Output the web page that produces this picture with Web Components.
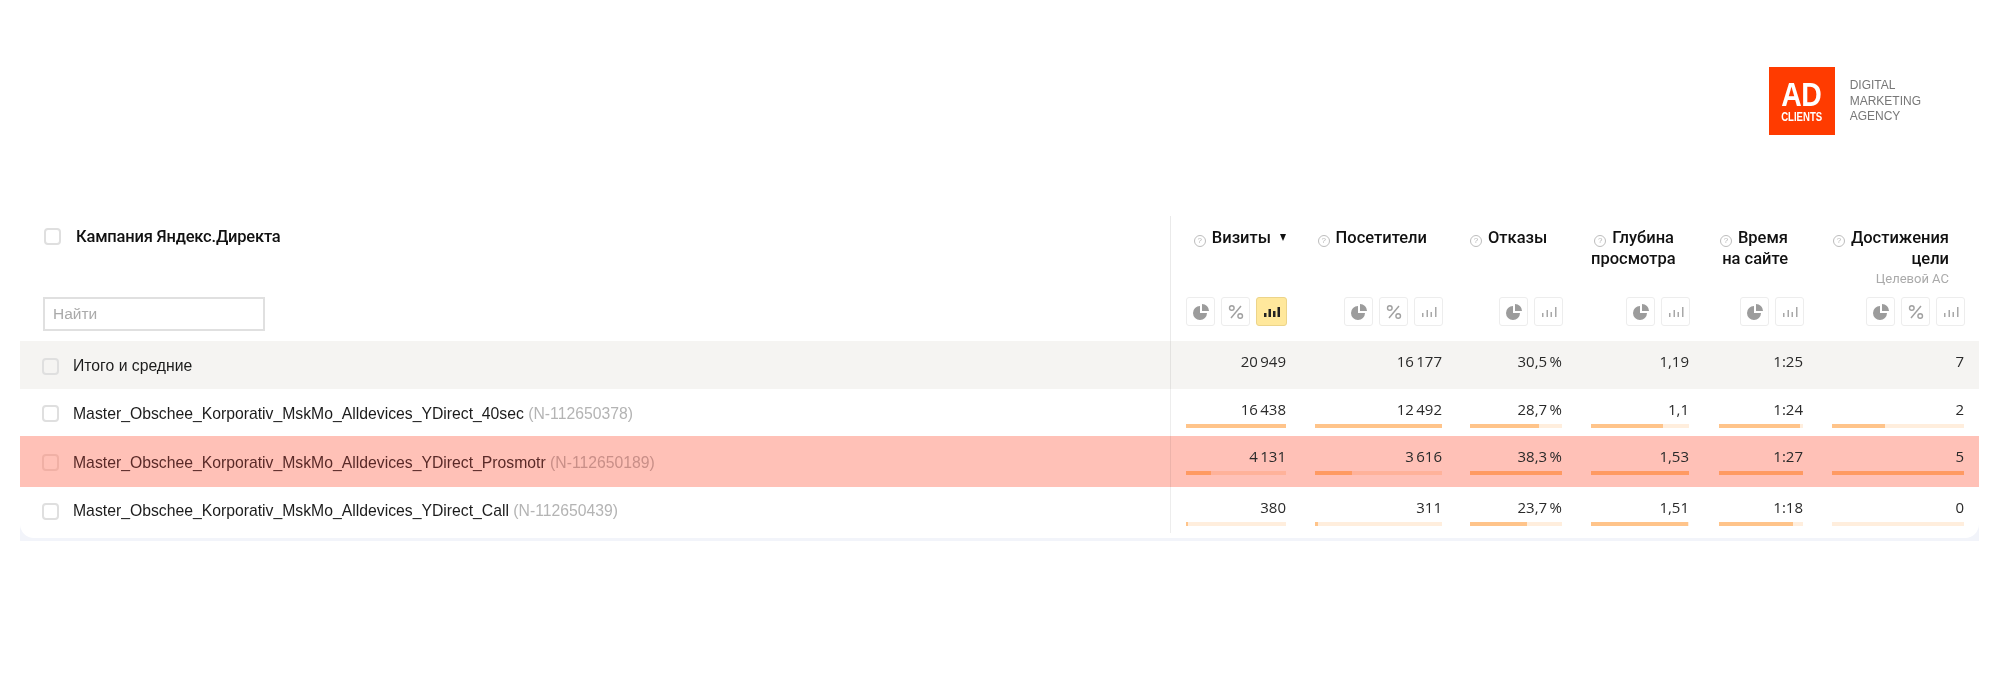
<!DOCTYPE html>
<html lang="ru">
<head>
<meta charset="utf-8">
<title>Отчёт</title>
<style>
  html, body { margin: 0; background: #fff; }
  body {
    font-family: "Liberation Sans", Arial, sans-serif;
    color: #222;
    --cols: 1150px 116px 156px 120px 127px 114px 161px;
  }
</style>
</head>
<body>

<ad-page>
  <ad-logo slot="logo"></ad-logo>
  <report-table slot="table">
    <report-head>
      <name-head></name-head>
      <metric-head help sorted views="pie,percent,bars-on" pad="15">Визиты</metric-head>
      <metric-head help views="pie,percent,bars" pad="29">Посетители</metric-head>
      <metric-head help views="pie,bars" pad="28">Отказы</metric-head>
      <metric-head help views="pie,bars" pad="29">Глубина<br>просмотра</metric-head>
      <metric-head help views="pie,bars" pad="30">Время<br>на&nbsp;сайте</metric-head>
      <metric-head help views="pie,percent,bars" pad="29" sub="Целевой АС">Достижения<br>цели</metric-head>
    </report-head>

    <report-row kind="total" height="48">
      <row-name>Итого и средние</row-name>
      <metric-cell pad="15" first>20&#8201;949</metric-cell>
      <metric-cell pad="29">16&#8201;177</metric-cell>
      <metric-cell pad="28">30,5&#8201;%</metric-cell>
      <metric-cell pad="29">1,19</metric-cell>
      <metric-cell pad="30">1:25</metric-cell>
      <metric-cell pad="29">7</metric-cell>
    </report-row>

    <report-row height="47">
      <row-name code="(N-112650378)">Master_Obschee_Korporativ_MskMo_Alldevices_YDirect_40sec</row-name>
      <metric-cell pad="15" first bar="100">16&#8201;438</metric-cell>
      <metric-cell pad="29" bar="100">12&#8201;492</metric-cell>
      <metric-cell pad="28" bar="75">28,7&#8201;%</metric-cell>
      <metric-cell pad="29" bar="73">1,1</metric-cell>
      <metric-cell pad="30" bar="96">1:24</metric-cell>
      <metric-cell pad="29" bar="40">2</metric-cell>
    </report-row>

    <report-row kind="marked" height="51">
      <row-name code="(N-112650189)">Master_Obschee_Korporativ_MskMo_Alldevices_YDirect_Prosmotr</row-name>
      <metric-cell pad="15" first bar="25">4&#8201;131</metric-cell>
      <metric-cell pad="29" bar="29">3&#8201;616</metric-cell>
      <metric-cell pad="28" bar="100">38,3&#8201;%</metric-cell>
      <metric-cell pad="29" bar="100">1,53</metric-cell>
      <metric-cell pad="30" bar="100">1:27</metric-cell>
      <metric-cell pad="29" bar="100">5</metric-cell>
    </report-row>

    <report-row height="46">
      <row-name code="(N-112650439)">Master_Obschee_Korporativ_MskMo_Alldevices_YDirect_Call</row-name>
      <metric-cell pad="15" first bar="2">380</metric-cell>
      <metric-cell pad="29" bar="2">311</metric-cell>
      <metric-cell pad="28" bar="62">23,7&#8201;%</metric-cell>
      <metric-cell pad="29" bar="99">1,51</metric-cell>
      <metric-cell pad="30" bar="88">1:18</metric-cell>
      <metric-cell pad="29" bar="0">0</metric-cell>
    </report-row>
  </report-table>
</ad-page>

<script>
function define(name, css, html) {
  customElements.define(name, class extends HTMLElement {
    constructor() {
      super();
      this.attachShadow({mode: 'open'});
      this.shadowRoot.innerHTML = `<style>${css}</style>${html}`;
    }
  });
}

define('ad-page', `
  :host { display: block; filter: blur(.3px); }
  .top { display: flex; justify-content: flex-end; padding: 67px 78px 81px 0; }
  .table { display: block; padding-left: 20px; padding-right: 20px; }
`, `
  <div class="top"><slot name="logo"></slot></div>
  <div class="table"><slot name="table"></slot></div>
`);

define('ad-logo', `
  :host { display: flex; align-items: center; gap: 15px; height: 68px; }
  .square {
    width: 66px; height: 68px; background: #ff3b00; color: #fff;
    display: flex; flex-direction: column; align-items: center; font-weight: 700;
  }
  .ad { font-size: 33px; line-height: 24px; margin-top: 16px; transform: scaleX(.86); letter-spacing: -.5px; }
  .clients { font-size: 12px; line-height: 9px; margin-top: 6px; transform: scaleX(.8); }
  .text { font-size: 12px; line-height: 15.5px; color: #777; padding-top: 1px; }
`, `
  <div class="square"><span class="ad">AD</span><span class="clients">CLIENTS</span></div>
  <div class="text">DIGITAL<br>MARKETING<br>AGENCY</div>
`);

define('report-table', `
  :host { display: block; height: 325px; background: linear-gradient(transparent 300px, #f2f4fa 300px); }
  .card { background: #fff; border-radius: 0 0 14px 14px; height: 322px; }
`, `<div class="card"><slot></slot></div>`);

define('report-head', `
  :host { display: grid; grid-template-columns: var(--cols); height: 125px; }
`, `<slot></slot>`);

define('check-box', `
  :host {
    display: block; box-sizing: border-box; width: 17px; height: 17px;
    border: 2px solid #dfdfdf; border-radius: 4px; background: #fff;
  }
`, ``);

define('name-head', `
  :host { display: flex; flex-direction: column; padding: 12px 0 0 24px; }
  .title { display: flex; align-items: center; gap: 15px; font: 500 16.5px/18px Roboto, sans-serif; color: #111; letter-spacing: -.2px; }
  .title check-box { margin-top: -2px; }
  .find {
    box-sizing: border-box; width: 222px; height: 34px; margin-top: 51px; margin-left: -1px;
    border: 2px solid #e0e0e0; padding-left: 8px;
    font: 15.5px/30px "Liberation Sans", sans-serif; color: #aaa;
  }
`, `
  <div class="title"><check-box></check-box><span>Кампания Яндекс.Директа</span></div>
  <div class="find">Найти</div>
`);

define('help-icon', `
  :host {
    display: inline-block; box-sizing: border-box; width: 12px; height: 12px; margin-right: 6px;
    border: 1px solid #bdbdbd; border-radius: 50%; color: #b5b5b5; vertical-align: 0;
    font: 400 8px/10px "Liberation Sans", sans-serif; text-align: center;
  }
`, `?`);

// the little chart-type buttons under each column title
const VIEW_ICONS = {
  pie: `<svg width="18" height="18" viewBox="0 0 18 18"><path fill="#9c9c9c" d="M8 3a7 7 0 1 0 7 7H8zM10 1v7h7a7 7 0 0 0-7-7z"/></svg>`,
  percent: `<svg width="18" height="18" viewBox="0 0 18 18" fill="none" stroke="#a0a0a0" stroke-width="1.4"><path d="M14 3 4 15"/><circle cx="4.8" cy="5" r="2.3"/><circle cx="13.2" cy="13" r="2.3"/></svg>`,
  bars: `<svg width="18" height="18" viewBox="0 0 18 18" fill="#a8a8a8"><rect x="2" y="10" width="1.5" height="4"/><rect x="6.5" y="7" width="1.5" height="7"/><rect x="10.5" y="9" width="1.5" height="5"/><rect x="15" y="4" width="1.5" height="10"/></svg>`,
  'bars-on': `<svg width="18" height="18" viewBox="0 0 18 18" fill="#222"><rect x="1" y="10" width="2.5" height="4"/><rect x="5.5" y="6" width="2.5" height="8"/><rect x="10" y="8" width="2.5" height="6"/><rect x="14.5" y="4" width="2.5" height="10"/></svg>`
};

class ViewButton extends HTMLElement {
  constructor() {
    super();
    this.attachShadow({mode: 'open'});
  }
  connectedCallback() {
    const type = this.getAttribute('type');
    this.shadowRoot.innerHTML = `
      <style>
        :host {
          display: flex; align-items: center; justify-content: center; box-sizing: border-box;
          width: 29px; height: 29px; border: 1px solid #ededed; border-radius: 3px; background: #fff;
        }
        :host([type=bars-on]) { width: 31px; background: #ffe89c; border-color: #ecd48a; }
      </style>
      ${VIEW_ICONS[type]}`;
  }
}
customElements.define('view-button', ViewButton);

class MetricHead extends HTMLElement {
  constructor() {
    super();
    this.attachShadow({mode: 'open'});
  }
  connectedCallback() {
    const views = this.getAttribute('views').split(',');
    const sub = this.getAttribute('sub');
    const sorted = this.hasAttribute('sorted');
    this.shadowRoot.innerHTML = `
      <style>
        :host {
          display: flex; flex-direction: column; justify-content: space-between; box-sizing: border-box;
          padding: 11px 0 15px ${this.getAttribute('pad')}px;
        }
        :host([sorted]) { border-left: 1px solid #eaeaea; }
        .label {
          position: relative; padding-right: 15px; text-align: right; white-space: nowrap;
          font: 500 16.5px/21px Roboto, sans-serif; color: #111;
        }
        .sort { position: absolute; right: 0; top: 7px; width: 0; height: 0; border: 3.5px solid transparent; border-top: 7px solid #111; border-bottom: 0; }
        .sub { display: block; font: 400 13px/20px Roboto, sans-serif; color: #aaa; }
        .views { display: flex; justify-content: flex-end; gap: 6px; margin-right: -1px; }
      </style>
      <div class="label"><help-icon></help-icon><slot></slot>${sorted ? '<span class="sort"></span>' : ''}${sub ? `<span class="sub">${sub}</span>` : ''}</div>
      <div class="views">${views.map(v => `<view-button type="${v}"></view-button>`).join('')}</div>`;
  }
}
customElements.define('metric-head', MetricHead);

class ReportRow extends HTMLElement {
  constructor() {
    super();
    this.attachShadow({mode: 'open'});
    this.shadowRoot.innerHTML = `
      <style>
        :host { display: grid; grid-template-columns: var(--cols); padding-right: 15px; }
        :host([kind=total]) { background: #f5f4f2; }
        :host([kind=marked]) { background: #ffc1b7; --track: #ffb29a; --fill: #ff9a62; --code: #c98f88; --box: #f0b0a5; --name: #5a2a28; }
      </style>
      <slot></slot>`;
  }
  connectedCallback() {
    this.style.height = this.getAttribute('height') + 'px';
  }
}
customElements.define('report-row', ReportRow);

class RowName extends HTMLElement {
  constructor() {
    super();
    this.attachShadow({mode: 'open'});
  }
  connectedCallback() {
    const code = this.getAttribute('code');
    this.shadowRoot.innerHTML = `
      <style>
        :host { display: flex; align-items: center; gap: 14px; padding: 2px 0 0 22px; font-size: 15.75px; color: var(--name, #1c1c1c); }
        check-box { flex: none; border-color: var(--box, #dfdfdf); background: transparent; }
        .code { color: var(--code, #b4b4b4); }
      </style>
      <check-box></check-box>
      <span><slot></slot>${code ? ` <span class="code">${code}</span>` : ''}</span>`;
  }
}
customElements.define('row-name', RowName);

class MetricCell extends HTMLElement {
  constructor() {
    super();
    this.attachShadow({mode: 'open'});
  }
  connectedCallback() {
    const bar = this.getAttribute('bar');
    this.shadowRoot.innerHTML = `
      <style>
        :host {
          display: block; box-sizing: border-box; padding: 10px 0 0 ${this.getAttribute('pad')}px;
          text-align: right; font: 15px/20px "Open Sans", sans-serif; color: #2a2a2a;
        }
        :host([first]) { border-left: 1px solid rgba(0, 0, 0, .07); }
        .track { height: 4px; margin-top: 5px; background: var(--track, #ffeedd); }
        .fill { height: 100%; background: var(--fill, #ffc48a); }
      </style>
      <div><slot></slot></div>
      ${bar !== null ? `<div class="track"><div class="fill" style="width:${bar}%"></div></div>` : ''}`;
  }
}
customElements.define('metric-cell', MetricCell);
</script>
</body>
</html>
